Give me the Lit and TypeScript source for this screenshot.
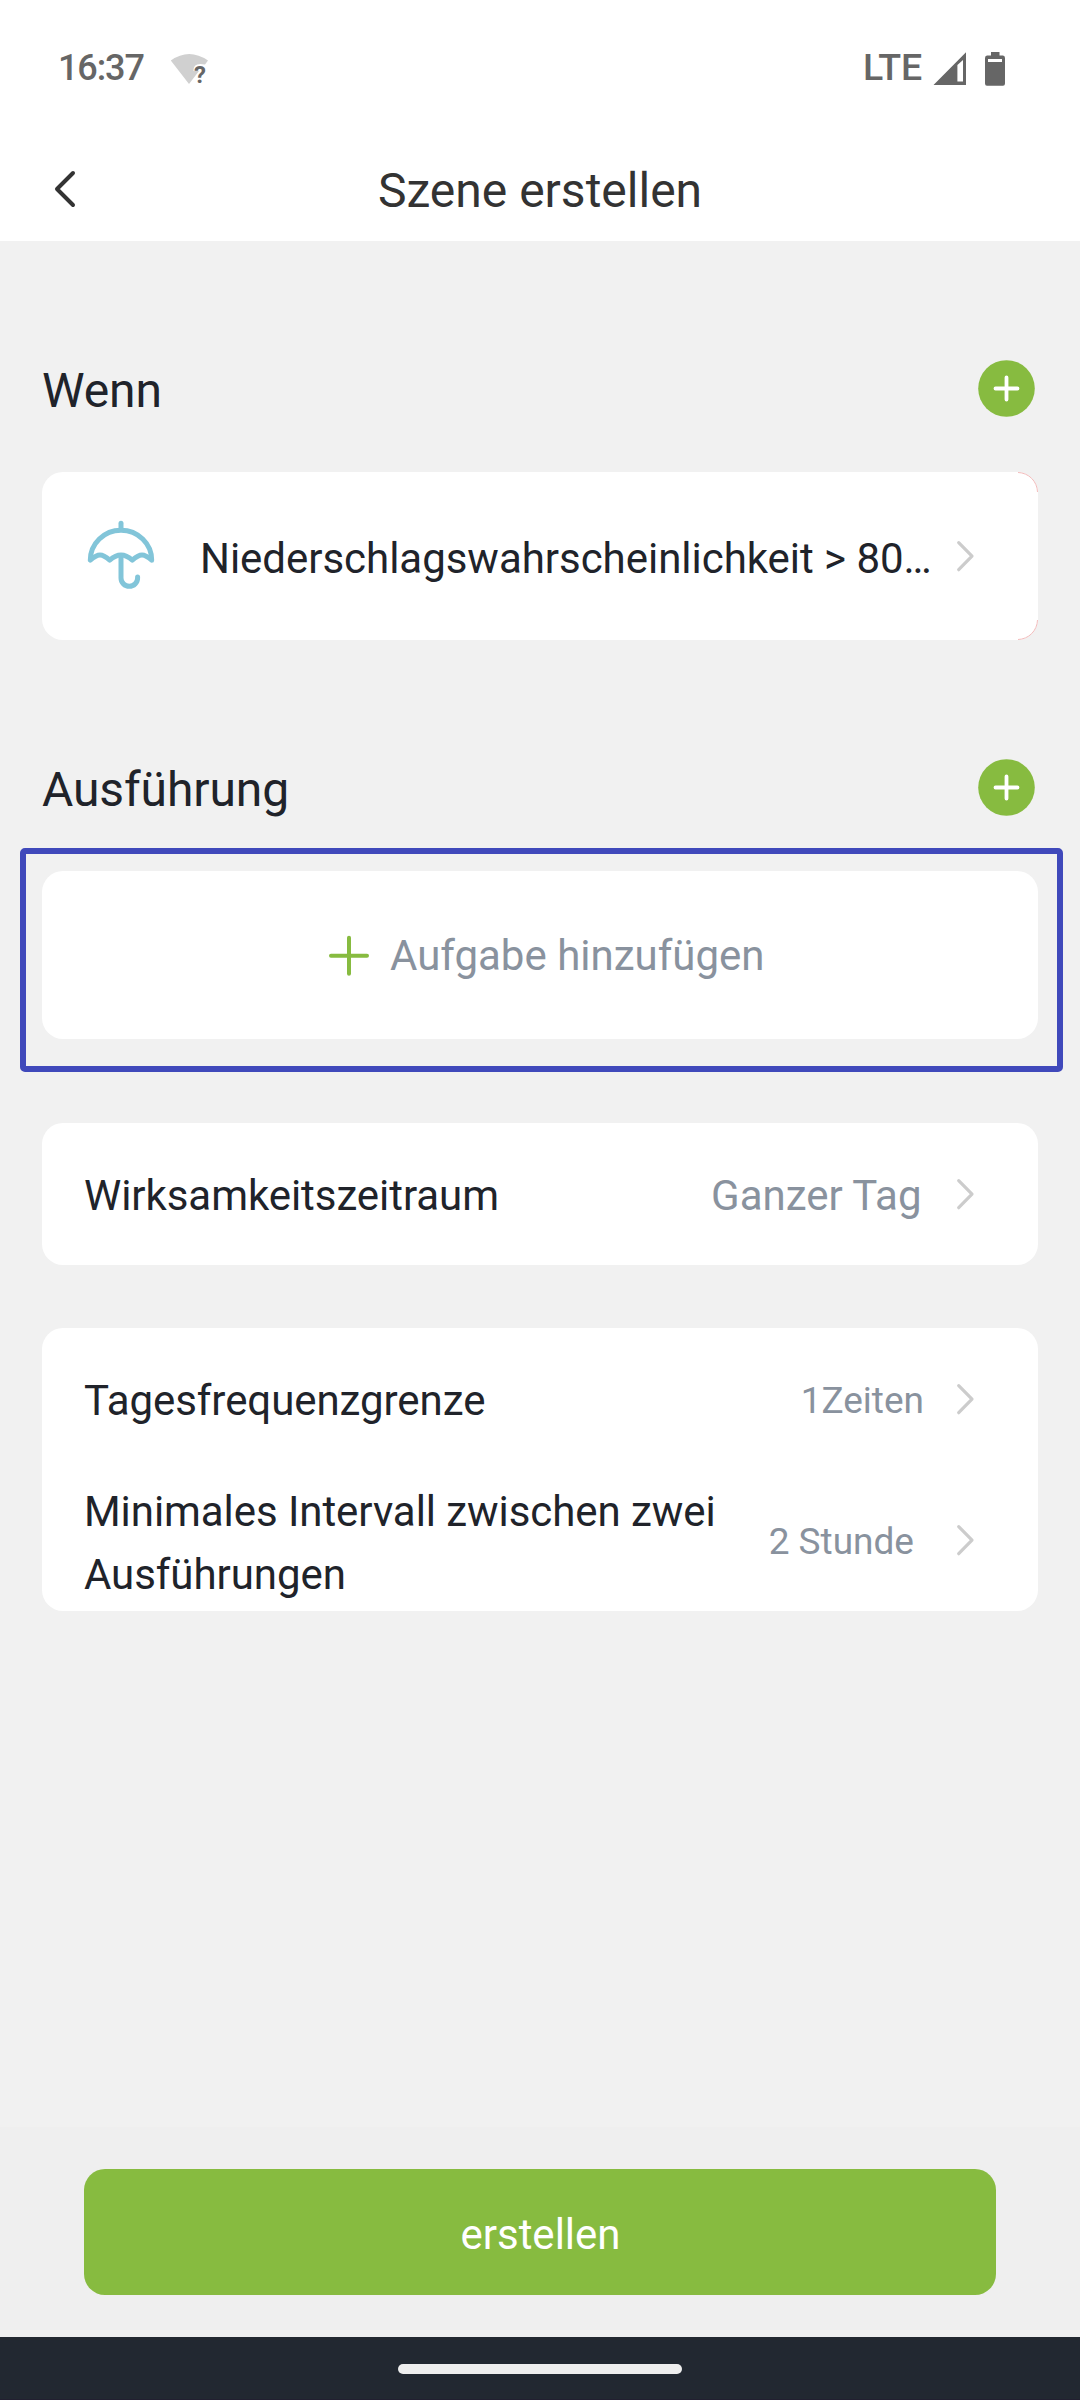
import { LitElement, html, css, svg } from "lit";
import { customElement, property } from "lit/decorators.js";

@customElement("scene-chevron")
class SceneChevron extends LitElement {
  static styles = css`
    :host { display: block; width: 20px; height: 34px; flex: none; }
    svg { display: block; }
  `;
  render() {
    return html`<svg width="20" height="34" viewBox="0 0 20 34" fill="none" stroke="#cccccc" stroke-width="3.2" stroke-linecap="round" stroke-linejoin="round"><path d="M2.700 3.700 L16 17.200 L2.700 30.700"/></svg>`;
  }
}

@customElement("scene-heading")
class SceneHeading extends LitElement {
  @property() label = "";
  static styles = css`
    :host { display: flex; align-items: center; justify-content: space-between; height: 58px; padding: 0 45px 0 42px; color: #20232a; }
    .label { font-size: 48px; line-height: 56px; padding-top: 6px; letter-spacing: -0.1px; }
    svg { display: block; }
  `;
  render() {
    return html`
      <div class="label">${this.label}</div>
      <svg width="57" height="58" viewBox="0 0 57 58">
        <circle cx="28.5" cy="29.5" r="28.3" fill="#87bb40"/>
        <path d="M17.500 29.500 H39.500 M28.500 18.500 V40.500" stroke="#fff" stroke-width="3.800" stroke-linecap="round"/>
      </svg>`;
  }
}

@customElement("setting-row")
class SettingRow extends LitElement {
  @property() label = "";
  @property() value = "";
  @property({ reflect: true }) size = "large";
  static styles = css`
    :host { display: flex; align-items: center; height: 141.5px; padding: 0 62px 0 42px; }
    .label { flex: 1; font-size: 42px; line-height: 63px; letter-spacing: -0.06px; color: #20232a; padding-top: 4px; }
    .value { font-size: 42px; line-height: 50px; color: #89929e; padding-top: 4px; margin-right: 34.5px; }
    :host([size="small"]) .value { font-size: 37px; margin-right: 32px; padding-top: 4px; }
    :host([size="spaced"]) .value { font-size: 37px; margin-right: 42px; padding-left: 40px; padding-top: 4px; }
    :host([size="spaced"]) .label { padding-top: 5px; }
  `;
  render() {
    return html`
      <div class="label">${this.label}</div>
      <div class="value">${this.value}</div>
      <scene-chevron></scene-chevron>`;
  }
}

@customElement("app-root")
class AppRoot extends LitElement {
  static styles = css`
    :host {
      display: flex; flex-direction: column; width: 1080px; height: 2400px; overflow: hidden;
      background: #f1f1f1; font-family: Roboto, "Noto Sans", sans-serif; color: #20232a;
    }
    svg { display: block; flex: none; }
    .top { background: #fff; height: 241px; flex: none; display: flex; flex-direction: column; }
    .status { display: flex; align-items: center; height: 137px; padding: 0 74px 0 58px; color: #666; font-weight: 500; }
    .time { font-size: 36px; letter-spacing: -1.1px; width: 112px; padding-bottom: 1px; }
    .wifi { overflow: visible; }
    .lte { font-size: 37.5px; margin-left: auto; margin-right: 11px; letter-spacing: -0.2px; padding-bottom: 3px; }
    .battery { margin-left: 19px; }
    .bar { display: grid; grid-template-columns: 100px 1fr 100px; align-items: center; height: 104px; }
    .back { margin-left: 52px; margin-top: -1px; }
    .title { font-size: 48px; line-height: 56px; text-align: center; color: #333; padding-top: 3px; }
    .content { flex: 1; display: flex; flex-direction: column; }
    .when { margin-top: 118px; }
    .run { margin-top: 118px; }
    .card { background: #fff; border-radius: 21px; margin: 0 42px; flex: none; }
    .condition { height: 168px; margin-top: 55px; display: flex; align-items: center; padding: 0 62px 0 42px; position: relative; }
    .condition .text { font-size: 42px; line-height: 50px; letter-spacing: -0.03px; margin-left: 42px; flex: 1; padding-top: 5px; white-space: nowrap; }
    .edge { position: absolute; right: 0; top: 0; }
    .frame { margin: 32px 17px 0 20px; height: 224px; box-sizing: border-box; border: 6px solid #4049bb; border-radius: 5px; padding: 17px 19px 27px 16px; flex: none; }
    .add { height: 168px; margin: 0; display: flex; align-items: center; padding-left: 286px; color: #89929e; font-size: 42px; }
    .add .text { margin-left: 20px; line-height: 50px; padding-top: 1px; }
    .period { margin-top: 51px; padding-bottom: 0.5px; }
    .limits { margin-top: 63px; }
    .footer { background: #efefef; height: 210px; flex: none; display: flex; align-items: center; padding: 0 84px; box-sizing: border-box; }
    .button { flex: 1; height: 126px; border: 0; border-radius: 21px; background: #87bb40; color: #fff; font: 400 42px Roboto, sans-serif; padding: 4px 0 0 1px; }
    .nav { background: #222831; height: 63px; flex: none; display: flex; justify-content: center; align-items: flex-start; padding-top: 27px; box-sizing: border-box; border-bottom: 1px solid #221f30; }
    .pill { width: 284px; height: 10px; border-radius: 5px; background: #eee; }
  `;

  private umbrella() {
    return svg`<g fill="none" stroke="#82c5d9" stroke-width="5" stroke-linecap="round" stroke-linejoin="round">
      <path d="M37 4.200 V10"/>
      <path d="M6.300 41.200 A30.700 30 0 0 1 67.700 41.200 C60 34.300 56 34.300 48.300 41.200 C40.500 34.300 33.500 34.300 25.700 41.200 C18 34.300 14 34.300 6.300 41.200 Z"/>
      <path d="M37 37 V59 A8.300 8.300 0 0 0 53.600 59 V58"/>
    </g>`;
  }

  render() {
    return html`
      <div class="top">
        <div class="status">
          <div class="time">16:37</div>
          <svg class="wifi" width="40" height="34" viewBox="170 52 40 34">
            <path d="M170.800 60.500 Q189 47.500 208 60.500 L205 64.500 Q193 62 193.500 71 H199 L189 84 Z" fill="#d0d0d0"/>
            <text x="194" y="82.700" font-size="24" font-weight="700" fill="#666">?</text>
          </svg>
          <div class="lte">LTE</div>
          <svg width="33" height="34" viewBox="933 51 33 34">
            <path fill="#666" fill-rule="evenodd" d="M933.500 84 L966 51.300 V84 Z M957.400 64 V80.500 H963 V59 Z"/>
          </svg>
          <svg class="battery" width="21" height="34" viewBox="985 51 21 34">
            <path fill="#666" fill-rule="evenodd" d="M991 51 H999.500 V54.500 H1003 Q1005 54.500 1005 57 V82.500 Q1005 84.700 1003 84.700 H987 Q985 84.700 985 82.500 V57 Q985 54.500 987 54.500 H991 Z M988 58 V61 H1002 V58 Z"/>
          </svg>
        </div>
        <div class="bar">
          <svg class="back" width="26" height="40" viewBox="0 0 26 40" fill="none" stroke="#333" stroke-width="4" stroke-linecap="round" stroke-linejoin="round"><path d="M21 4 L5 20 L21 36"/></svg>
          <div class="title">Szene erstellen</div>
        </div>
      </div>
      <div class="content">
        <scene-heading class="when" label="Wenn"></scene-heading>
        <div class="card condition">
          <svg width="74" height="74" viewBox="0 0 74 74">${this.umbrella()}</svg>
          <div class="text">Niederschlagswahrscheinlichkeit &gt; 80…</div>
          <scene-chevron></scene-chevron>
          <svg class="edge" width="22" height="168" viewBox="0 0 22 168" fill="none" stroke="#f3bcbc" stroke-width="1"><path d="M2 .5 A20 20 0 0 1 21.500 20 M21.500 148 A20 20 0 0 1 2 167.500"/></svg>
        </div>
        <scene-heading class="run" label="Ausführung"></scene-heading>
        <div class="frame">
          <div class="card add">
            <svg width="42" height="42" viewBox="0 0 42 42"><path d="M3 21.800 H39 M21 3.800 V39.800" stroke="#87bb40" stroke-width="4" stroke-linecap="round"/></svg>
            <div class="text">Aufgabe hinzufügen</div>
          </div>
        </div>
        <div class="card period">
          <setting-row label="Wirksamkeitszeitraum" value="Ganzer Tag"></setting-row>
        </div>
        <div class="card limits">
          <setting-row label="Tagesfrequenzgrenze" value="1Zeiten" size="small"></setting-row>
          <setting-row label="Minimales Intervall zwischen zwei Ausführungen" value="2 Stunde" size="spaced"></setting-row>
        </div>
      </div>
      <div class="footer"><button class="button">erstellen</button></div>
      <div class="nav"><div class="pill"></div></div>
    `;
  }
}
